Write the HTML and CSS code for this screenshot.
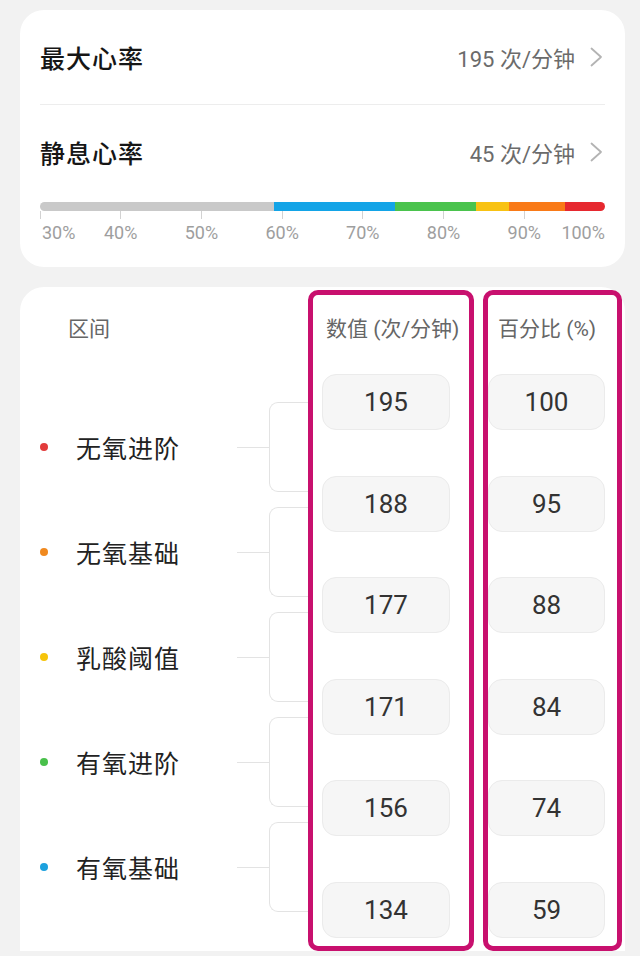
FILE: index.html
```html
<!DOCTYPE html>
<html lang="zh-CN">
<head>
    <meta charset="UTF-8">
    <meta name="viewport" content="width=device-width, initial-scale=1">
    <title>心率区间</title>
    <link rel="stylesheet" href="styles.css">
</head>
<body>
<div class="hr-card hr-summary">
    <div class="hr-row">
        <span class="hr-row-title">最大心率</span>
        <span class="hr-row-value">195 次/分钟
            <svg class="hr-row-arrow" viewBox="0 0 13 20" aria-hidden="true"><polyline points="1.5,1.5 11,10 1.5,18.5"></polyline></svg>
        </span>
    </div>
    <div class="hr-row">
        <span class="hr-row-title">静息心率</span>
        <span class="hr-row-value">45 次/分钟
            <svg class="hr-row-arrow" viewBox="0 0 13 20" aria-hidden="true"><polyline points="1.5,1.5 11,10 1.5,18.5"></polyline></svg>
        </span>
    </div>
    <div class="hr-bar">
        <i class="hr-bar-seg seg-rest" style="width:41.33%"></i>
        <i class="hr-bar-seg seg-blue" style="width:21.45%"></i>
        <i class="hr-bar-seg seg-green" style="width:14.39%"></i>
        <i class="hr-bar-seg seg-yellow" style="width:5.77%"></i>
        <i class="hr-bar-seg seg-orange" style="width:9.98%"></i>
        <i class="hr-bar-seg seg-red" style="width:7.08%"></i>
    </div>
    <div class="hr-scale">
        <div class="hr-scale-mark"><i class="hr-scale-tick"></i><span class="hr-scale-label">30%</span></div>
        <div class="hr-scale-mark"><i class="hr-scale-tick"></i><span class="hr-scale-label">40%</span></div>
        <div class="hr-scale-mark"><i class="hr-scale-tick"></i><span class="hr-scale-label">50%</span></div>
        <div class="hr-scale-mark"><i class="hr-scale-tick"></i><span class="hr-scale-label">60%</span></div>
        <div class="hr-scale-mark"><i class="hr-scale-tick"></i><span class="hr-scale-label">70%</span></div>
        <div class="hr-scale-mark"><i class="hr-scale-tick"></i><span class="hr-scale-label">80%</span></div>
        <div class="hr-scale-mark"><i class="hr-scale-tick"></i><span class="hr-scale-label">90%</span></div>
        <div class="hr-scale-mark"><i class="hr-scale-tick"></i><span class="hr-scale-label">100%</span></div>
    </div>
</div>

<div class="hr-card hr-zones">
    <div class="hr-zones-names">
        <div class="hr-zones-head">区间</div>
        <div class="hr-zone">
            <i class="hr-zone-dot dot-red"></i><span class="hr-zone-name">无氧进阶</span>
            <i class="hr-zone-link"></i><i class="hr-zone-bracket"></i>
        </div>
        <div class="hr-zone">
            <i class="hr-zone-dot dot-orange"></i><span class="hr-zone-name">无氧基础</span>
            <i class="hr-zone-link"></i><i class="hr-zone-bracket"></i>
        </div>
        <div class="hr-zone">
            <i class="hr-zone-dot dot-yellow"></i><span class="hr-zone-name">乳酸阈值</span>
            <i class="hr-zone-link"></i><i class="hr-zone-bracket"></i>
        </div>
        <div class="hr-zone">
            <i class="hr-zone-dot dot-green"></i><span class="hr-zone-name">有氧进阶</span>
            <i class="hr-zone-link"></i><i class="hr-zone-bracket"></i>
        </div>
        <div class="hr-zone">
            <i class="hr-zone-dot dot-blue"></i><span class="hr-zone-name">有氧基础</span>
            <i class="hr-zone-link"></i><i class="hr-zone-bracket"></i>
        </div>
    </div>
    <div class="hr-zones-col hr-zones-col-value">
        <div class="hr-zones-head">数值 (次/分钟)</div>
        <div class="hr-zones-cell">195</div>
        <div class="hr-zones-cell">188</div>
        <div class="hr-zones-cell">177</div>
        <div class="hr-zones-cell">171</div>
        <div class="hr-zones-cell">156</div>
        <div class="hr-zones-cell">134</div>
    </div>
    <div class="hr-zones-col hr-zones-col-percent">
        <div class="hr-zones-head">百分比 (%)</div>
        <div class="hr-zones-cell">100</div>
        <div class="hr-zones-cell">95</div>
        <div class="hr-zones-cell">88</div>
        <div class="hr-zones-cell">84</div>
        <div class="hr-zones-cell">74</div>
        <div class="hr-zones-cell">59</div>
    </div>
</div>
</body>
</html>
```

FILE: styles.css
```css
html,body{
    margin: 0;
    padding: 0;
}
body{
    background: #f2f2f2;
    font-family: Roboto, "Noto Sans CJK SC", sans-serif;
    color: #222;
    overflow: hidden;
}
i{
    display: block;
}

.hr-card{
    box-sizing: border-box;
    width: 605px;
    margin-left: 20px;
    background: #fff;
    border-radius: 24px;
}

/* 顶部：最大/静息心率 */
.hr-summary{
    margin-top: 10px;
    padding: 0 20px 23px;
}
.hr-row{
    height: 94px;
    display: flex;
    align-items: center;
    justify-content: space-between;
}
.hr-row + .hr-row{
    border-top: 1px solid #ededed;
}
.hr-row-title{
    font-size: 25px;
    font-weight: 500;
    letter-spacing: 1px;
    color: #161616;
}
.hr-row-value{
    display: flex;
    align-items: center;
    font-size: 22px;
    color: #6b6b6b;
}
.hr-row-arrow{
    width: 13px;
    height: 20px;
    margin-left: 15px;
    margin-right: 2px;
    fill: none;
    stroke: #b3b3b3;
    stroke-width: 1.8;
    stroke-linecap: round;
    stroke-linejoin: round;
}

/* 区间色条 */
.hr-bar{
    display: flex;
    height: 9px;
    margin-top: 3px;
    border-radius: 5px;
    overflow: hidden;
}
.seg-rest{ background: #c9c9c9; }
.seg-blue{ background: #13a4e7; }
.seg-green{ background: #4ac34d; }
.seg-yellow{ background: #f8c213; }
.seg-orange{ background: #f97a17; }
.seg-red{ background: #e6282f; }

.hr-scale{
    display: flex;
    justify-content: space-between;
}
.hr-scale-mark{
    width: 0;
    display: flex;
    flex-direction: column;
    align-items: center;
}
.hr-scale-mark:first-child{
    align-items: flex-start;
}
.hr-scale-mark:last-child{
    align-items: flex-end;
}
.hr-scale-tick{
    width: 1px;
    height: 8px;
    background: #d2d2d2;
}
.hr-scale-mark:last-child .hr-scale-tick{
    visibility: hidden;
}
.hr-scale-label{
    margin-top: 3px;
    font-size: 18px;
    line-height: 22px;
    color: #9e9e9e;
    white-space: nowrap;
}
.hr-scale-mark:first-child .hr-scale-label{
    padding-left: 2px;
}

/* 区间表 */
.hr-zones{
    margin-top: 20px;
    padding: 3px 3px 0 0;
    border-radius: 24px 24px 0 0;
    display: grid;
    grid-template-columns: 288px 166px 148px;
}
.hr-zones-head{
    height: 68px;
    line-height: 68px;
    font-size: 21px;
    color: #666;
    white-space: nowrap;
}
.hr-zones-names{
    padding-top: 5px;
}
.hr-zones-names .hr-zones-head{
    padding-left: 48px;
}
.hr-zone{
    display: flex;
    align-items: center;
    height: 90px;
    margin-top: 15px;
}
.hr-zones-head + .hr-zone{
    margin-top: 39px;
}
.hr-zone-dot{
    width: 8px;
    height: 8px;
    margin-left: 20px;
    border-radius: 50%;
}
.dot-red{ background: #e23b3b; }
.dot-orange{ background: #f0891f; }
.dot-yellow{ background: #f6c40a; }
.dot-green{ background: #49c04b; }
.dot-blue{ background: #1ca1de; }
.hr-zone-name{
    flex: 1;
    margin-left: 28px;
    font-size: 25px;
    letter-spacing: 1px;
    color: #222;
}
.hr-zone-link{
    width: 32px;
    height: 1px;
    background: #e3e3e3;
}
.hr-zone-bracket{
    box-sizing: border-box;
    width: 39px;
    align-self: stretch;
    border: 1px solid #e3e3e3;
    border-right: 0;
    border-radius: 9px 0 0 9px;
}

.hr-zones-col{
    border: 5px solid #c8106e;
    border-radius: 10px;
    padding-bottom: 8px;
}
.hr-zones-col-value{
    padding-left: 9px;
}
.hr-zones-col-value .hr-zones-head{
    padding-left: 4px;
}
.hr-zones-col-percent{
    margin-left: 9px;
}
.hr-zones-col-percent .hr-zones-head{
    padding-left: 10px;
}
.hr-zones-cell{
    box-sizing: border-box;
    height: 56px;
    margin-top: 45.5px;
    display: flex;
    align-items: center;
    justify-content: center;
    background: #f6f6f6;
    border: 1px solid #ebebeb;
    border-radius: 14px;
    font-size: 26px;
    color: #333;
}
.hr-zones-head + .hr-zones-cell{
    margin-top: 11px;
}
.hr-zones-col-value .hr-zones-cell{
    width: 128px;
}
.hr-zones-col-percent .hr-zones-cell{
    width: 117px;
}
```
